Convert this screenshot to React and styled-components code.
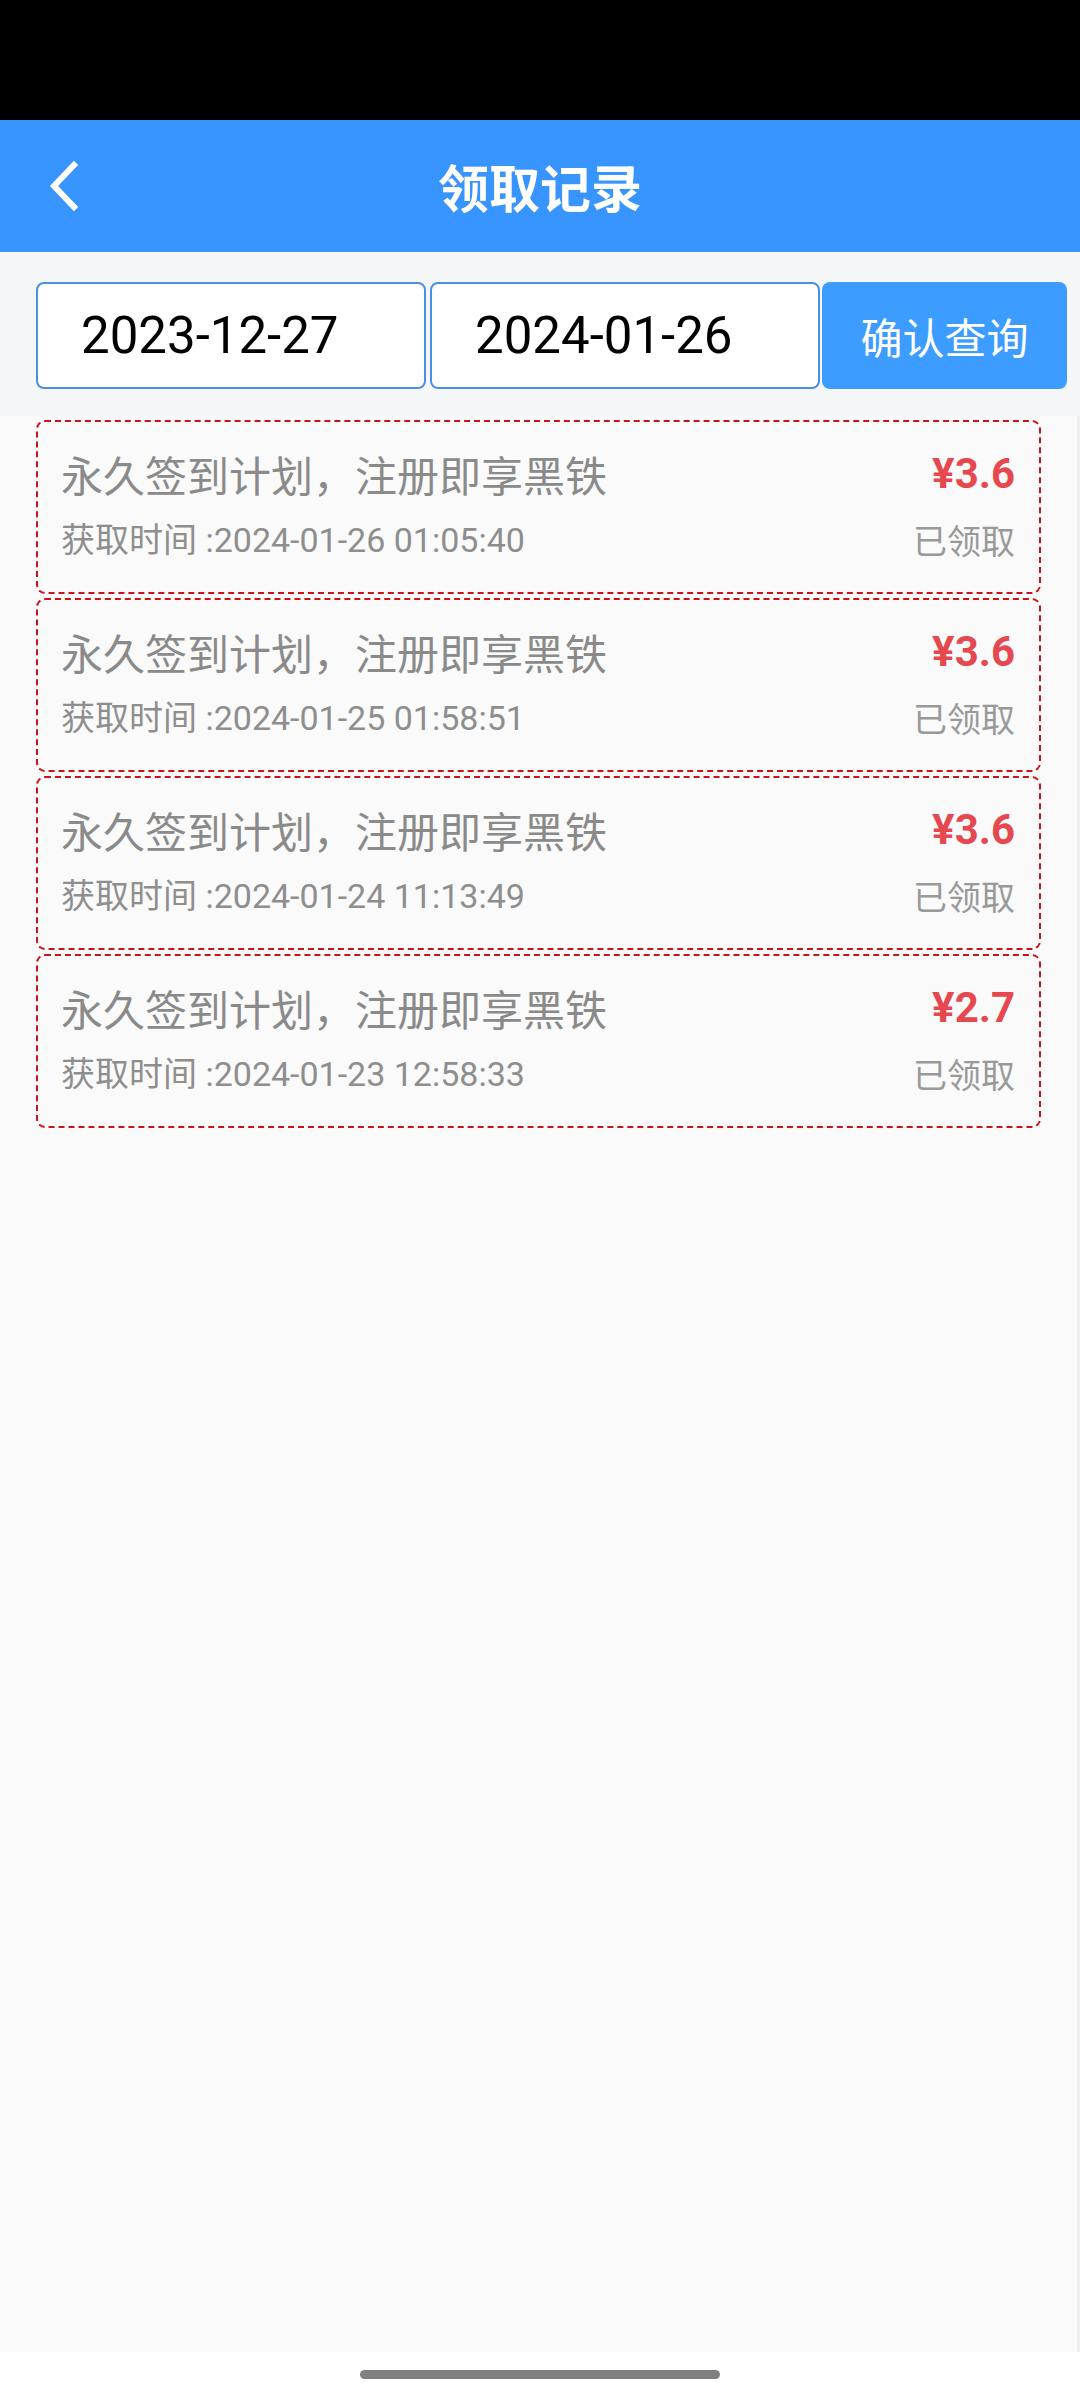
import React, { useState } from 'react'
import styled, { createGlobalStyle } from 'styled-components'

const GlobalStyle = createGlobalStyle`
    html, body {
        margin: 0;
        padding: 0;
        background: #ffffff;
    }
    body {
        font-family: Roboto, "Noto Sans CJK SC", "Noto Sans", sans-serif;
    }
    * {
        box-sizing: border-box;
    }
`

const records = [
    { id: 1, title: '永久签到计划，注册即享黑铁', time: '2024-01-26 01:05:40', amount: '3.6' },
    { id: 2, title: '永久签到计划，注册即享黑铁', time: '2024-01-25 01:58:51', amount: '3.6' },
    { id: 3, title: '永久签到计划，注册即享黑铁', time: '2024-01-24 11:13:49', amount: '3.6' },
    { id: 4, title: '永久签到计划，注册即享黑铁', time: '2024-01-23 12:58:33', amount: '2.7' },
]

function BackIcon() {
    return (
        <svg width="40" height="52" viewBox="0 0 40 52" fill="none">
            <path d="M30 5 L10 26 L30 47" stroke="#ffffff" strokeWidth="6" strokeLinecap="square" strokeLinejoin="miter" />
        </svg>
    )
}

function App() {
    const [start, setStart] = useState('2023-12-27')
    const [end, setEnd] = useState('2024-01-26')

    return (
        <Page>
            <GlobalStyle />
            <StatusBar />
            <Header>
                <BackButton aria-label="返回">
                    <BackIcon />
                </BackButton>
                <Title>领取记录</Title>
            </Header>
            <FilterBar>
                <DateInput value={start} onChange={(e) => setStart(e.target.value)} />
                <DateInput value={end} onChange={(e) => setEnd(e.target.value)} />
                <QueryButton>确认查询</QueryButton>
            </FilterBar>
            <List>
                {records.map((item) => (
                    <Card key={item.id}>
                        <CardTitle>{item.title}</CardTitle>
                        <Amount>¥{item.amount}</Amount>
                        <CardTime>获取时间 :{item.time}</CardTime>
                        <Status>已领取</Status>
                    </Card>
                ))}
            </List>
            <NavBar>
                <NavPill />
            </NavBar>
        </Page>
    )
}

const Page = styled.div`
    width: 1080px;
    height: 2400px;
    display: flex;
    flex-direction: column;
    background: #ffffff;
`

const StatusBar = styled.div`
    height: 120px;
    flex-shrink: 0;
    background: #000000;
`

const Header = styled.header`
    height: 132px;
    flex-shrink: 0;
    background: #3894ff;
    display: flex;
    align-items: center;
    justify-content: center;
    position: relative;
`

const BackButton = styled.button`
    position: absolute;
    left: 44px;
    top: 50%;
    transform: translateY(-50%);
    display: flex;
    align-items: center;
    padding: 0;
    border: none;
    background: transparent;
    cursor: pointer;
`

const Title = styled.h1`
    margin: 0;
    color: #ffffff;
    font-family: "Noto Sans CJK SC", sans-serif;
    font-size: 51px;
    font-weight: 700;
    letter-spacing: 0;
`

const FilterBar = styled.div`
    flex-shrink: 0;
    height: 164px;
    background: #f5f6f8;
    display: flex;
    align-items: flex-start;
    padding: 30px 13px 0 36px;
    gap: 4px;
`

const DateInput = styled.input`
    width: 390px;
    height: 107px;
    border: 2px solid #4a90e2;
    border-radius: 8px;
    background: #ffffff;
    padding: 0 0 0 43px;
    font-family: Roboto, sans-serif;
    font-size: 51px;
    color: #000000;
    outline: none;
`

const QueryButton = styled.button`
    flex: 1;
    height: 107px;
    margin-left: -2px;
    border: none;
    border-radius: 8px;
    background: #3d9cff;
    color: #ffffff;
    font-family: "Noto Sans CJK SC", sans-serif;
    font-size: 42px;
    cursor: pointer;
`

const List = styled.div`
    flex: 1;
    background: #fafafa;
    border-right: 3px solid #f0f0f0;
    padding: 4px 0 0 36px;
    display: flex;
    flex-direction: column;
    gap: 4px;
`

const Card = styled.div`
    width: 1005px;
    height: 174px;
    border: 2px dashed #c9121a;
    border-radius: 9px;
    padding: 0 24px 0 23px;
    display: grid;
    grid-template-columns: 1fr auto;
    grid-template-rows: 66px 66px;
    align-content: center;
    align-items: center;
`

const CardTitle = styled.div`
    font-family: "Noto Sans CJK SC", sans-serif;
    font-size: 42px;
    color: #8a8a8a;
    line-height: 1;
    white-space: nowrap;
`

const CardTime = styled.div`
    font-family: Roboto, "Noto Sans CJK SC", sans-serif;
    font-size: 34px;
    color: #8e8e8e;
    line-height: 1;
    white-space: nowrap;
`

const Amount = styled.div`
    justify-self: end;
    font-family: Roboto, sans-serif;
    font-size: 42px;
    font-weight: 700;
    color: #e6484f;
    line-height: 1;
`

const Status = styled.div`
    justify-self: end;
    font-family: "Noto Sans CJK SC", sans-serif;
    font-size: 34px;
    color: #999999;
    line-height: 1;
`

const NavBar = styled.div`
    height: 48px;
    flex-shrink: 0;
    background: #ffffff;
    display: flex;
    justify-content: center;
    padding-top: 18px;
`

const NavPill = styled.div`
    width: 360px;
    height: 9px;
    border-radius: 5px;
    background: #808080;
`

export default App
